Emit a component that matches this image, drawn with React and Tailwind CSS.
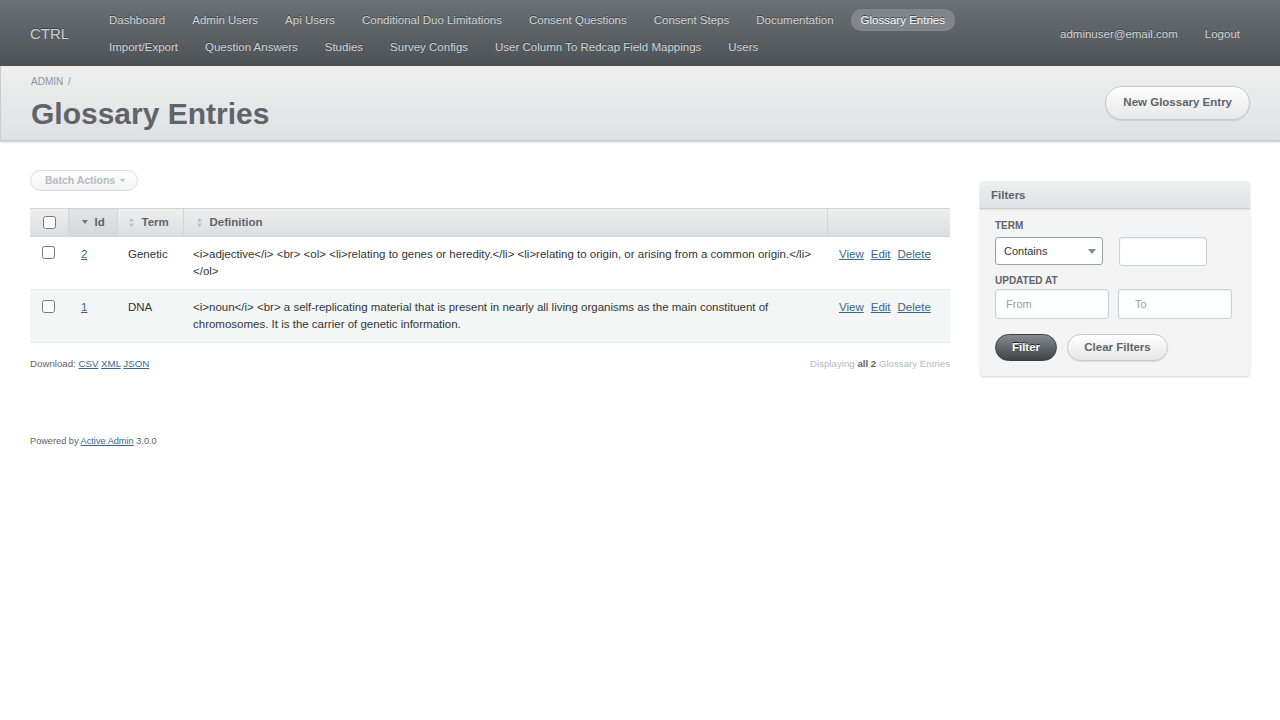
import React from "react";

const navRow = [
  "Dashboard",
  "Admin Users",
  "Api Users",
  "Conditional Duo Limitations",
  "Consent Questions",
  "Consent Steps",
  "Documentation",
  "Glossary Entries",
  "Import/Export",
  "Question Answers",
  "Studies",
  "Survey Configs",
  "User Column To Redcap Field Mappings",
  "Users",
];

function SortDown() {
  return (
    <svg width="6" height="4" viewBox="0 0 6 4" className="inline-block mr-[7px] align-middle relative -top-[1px]">
      <path d="M0 0 L6 0 L3 4 Z" fill="#6f767b" />
    </svg>
  );
}

function SortBoth() {
  return (
    <svg width="5" height="9" viewBox="0 0 5 9" className="inline-block mr-[8px] align-middle relative -top-[1px]">
      <path d="M0 3.5 L5 3.5 L2.5 0 Z" fill="#b8bfc4" />
      <path d="M0 5.5 L5 5.5 L2.5 9 Z" fill="#b8bfc4" />
    </svg>
  );
}

function Actions() {
  return (
    <>
      <a className="text-[#38678b] underline mr-[7px]">View</a>
      <a className="text-[#38678b] underline mr-[7px]">Edit</a>
      <a className="text-[#38678b] underline">Delete</a>
    </>
  );
}

export default function App() {
  return (
    <div className="font-['Liberation_Sans',Arial,sans-serif] bg-white min-h-[720px] text-[#323537]">
      {/* Header */}
      <div className="flex h-[66px] items-center bg-gradient-to-b from-[#6a7176] to-[#4d5256] pl-[30px] pr-[30px]">
        <div className="w-[69px] flex-none pt-[2px] text-[15px] text-[#cdcdcd] [text-shadow:0_-1px_0_#3f4447]">CTRL</div>
        <div className="flex flex-wrap w-[945px] gap-y-[5px]">
          {navRow.map((n) => {
            const active = n === "Glossary Entries";
            return (
              <a
                key={n}
                className={
                  "px-[10px] py-[5px] mr-[7px] rounded-[10px] text-[11.5px] leading-[12px] [text-shadow:0_-1px_0_#3f4447] " +
                  (active ? "bg-[#80868b] text-white" : "text-[#d2d4d5]")
                }
              >
                {n}
              </a>
            );
          })}
        </div>
        <div className="ml-auto flex pt-[2px]">
          <a className="px-[10px] py-[5px] mr-[7px] text-[11.5px] leading-[12px] text-[#d2d4d5] [text-shadow:0_-1px_0_#3f4447]">adminuser@email.com</a>
          <a className="px-[10px] py-[5px] text-[11.5px] leading-[12px] text-[#d2d4d5] [text-shadow:0_-1px_0_#3f4447]">Logout</a>
        </div>
      </div>

      {/* Title bar */}
      <div className="flex h-[75px] items-center justify-between bg-gradient-to-b from-[#efefef] to-[#dfe1e2] border-b border-l border-[#cdcdcd] shadow-[0_1px_2px_rgba(0,0,0,0.25)] pl-[30px] pr-[30px]">
        <div className="flex flex-col self-start pt-[9px]">
          <div className="text-[10px] leading-[14px] text-[#8a949e]">
            ADMIN <span className="ml-[2px] text-[#8a949e]">/</span>
          </div>
          <h2 className="mt-[8px] text-[30px] leading-[34px] font-bold text-[#5e6469]">Glossary Entries</h2>
        </div>
        <a className="flex h-[34px] items-center rounded-full border border-[#c7c7c7] bg-gradient-to-b from-white to-[#e7e7e7] px-[17px] text-[11.5px] font-bold text-[#5e6469] shadow-[0_1px_1px_rgba(0,0,0,0.1)]">
          New Glossary Entry
        </a>
      </div>

      {/* Content */}
      <div className="flex pl-[30px] pr-[30px] pt-[26px] gap-[30px]">
        <div className="w-[920px] flex-none">
          <div className="inline-flex h-[21px] items-center rounded-full border border-[#dcdcdc] bg-gradient-to-b from-white to-[#f3f3f3] pl-[14px] pr-[12px] text-[10.5px] font-bold text-[#b3bcc1]">
            Batch Actions
            <svg width="5" height="3" viewBox="0 0 5 3" className="ml-[5px]">
              <path d="M0 0 L5 0 L2.5 3 Z" fill="#b3bcc1" />
            </svg>
          </div>

          <table className="mt-[17px] w-[920px] table-fixed border-collapse">
            <colgroup>
              <col className="w-[38px]" />
              <col className="w-[49px]" />
              <col className="w-[66px]" />
              <col className="w-[644px]" />
              <col className="w-[123px]" />
            </colgroup>
            <thead>
              <tr className="h-[28px] bg-gradient-to-b from-[#efefef] to-[#dcdddf] text-[11.5px] font-bold text-[#5e6469]">
                <th className="border-t border-b border-[#d4d4d4] pl-[13px] text-left align-middle">
                  <input type="checkbox" className="m-0 align-middle relative -top-[1px]" />
                </th>
                <th className="border-t border-b border-l border-[#d4d4d4] bg-gradient-to-b from-[#e3e4e5] to-[#d5d7d9] pl-[13px] text-left">
                  <SortDown />Id
                </th>
                <th className="border-t border-b border-l border-[#d4d4d4] pl-[11px] text-left">
                  <SortBoth />Term
                </th>
                <th className="border-t border-b border-l border-[#d4d4d4] pl-[13px] text-left">
                  <SortBoth />Definition
                </th>
                <th className="border-t border-b border-l border-[#d4d4d4]"></th>
              </tr>
            </thead>
            <tbody className="text-[11.5px] leading-[17px] text-[#323537]">
              <tr className="bg-white border-b border-[#e8e8e8]">
                <td className="pl-[12px] pt-[9px] pb-[9px] align-top">
                  <input type="checkbox" className="m-0 mt-[0px]" />
                </td>
                <td className="pl-[13px] pt-[9px] pb-[9px] align-top">
                  <a className="text-[#38678b] underline">2</a>
                </td>
                <td className="pl-[11px] pt-[9px] pb-[9px] align-top">Genetic</td>
                <td className="pl-[10px] pr-[10px] pt-[9px] pb-[9px] align-top">
                  {"<i>adjective</i> <br> <ol> <li>relating to genes or heredity.</li> <li>relating to origin, or arising from a common origin.</li> </ol>"}
                </td>
                <td className="pl-[12px] pt-[9px] pb-[9px] align-top whitespace-nowrap">
                  <Actions />
                </td>
              </tr>
              <tr className="bg-[#f4f5f5] border-b border-[#e8e8e8]">
                <td className="pl-[12px] pt-[9px] pb-[9px] align-top">
                  <input type="checkbox" className="m-0 mt-[1px]" />
                </td>
                <td className="pl-[13px] pt-[9px] pb-[9px] align-top">
                  <a className="text-[#38678b] underline">1</a>
                </td>
                <td className="pl-[11px] pt-[9px] pb-[9px] align-top">DNA</td>
                <td className="pl-[10px] pr-[10px] pt-[9px] pb-[9px] align-top">
                  {"<i>noun</i> <br> a self-replicating material that is present in nearly all living organisms as the main constituent of chromosomes. It is the carrier of genetic information."}
                </td>
                <td className="pl-[12px] pt-[9px] pb-[9px] align-top whitespace-nowrap">
                  <Actions />
                </td>
              </tr>
            </tbody>
          </table>

          <div className="mt-[14px] flex justify-between text-[9.7px] leading-[14px]">
            <div className="text-[#5e6469]">
              Download: <a className="text-[#38678b] underline">CSV</a>{" "}
              <a className="text-[#38678b] underline">XML</a>{" "}
              <a className="text-[#38678b] underline">JSON</a>
            </div>
            <div className="text-[#b3bcc1]">
              Displaying <b className="text-[#5e6469]">all 2</b> Glossary Entries
            </div>
          </div>

          <div className="mt-[63px] text-[9.2px] leading-[14px] text-[#5e6469]">
            Powered by <a className="text-[#38678b] underline">Active Admin</a> 3.0.0
          </div>
        </div>

        {/* Sidebar */}
        <div className="w-[270px] flex-none mt-[14px]">
          <div className="rounded-[4px] bg-[#f4f4f4] shadow-[0_1px_2px_rgba(0,0,0,0.18)]">
            <div className="flex h-[28px] items-center rounded-t-[4px] border-b border-[#cdcdcd] bg-gradient-to-b from-[#efefef] to-[#dfe1e2] pl-[11px] pt-[2px] text-[11.5px] font-bold text-[#5e6469] shadow-[0_1px_1px_rgba(0,0,0,0.08)]">
              Filters
            </div>
            <div className="px-[15px] pt-[10px] pb-[15px]">
              <div className="text-[10px] leading-[14px] font-bold text-[#5e6469]">TERM</div>
              <div className="mt-[3px] flex h-[30px] items-center">
                <div className="flex h-[28px] w-[108px] items-center justify-between rounded-[3px] border border-[#9aa1a6] bg-white pl-[8px] pr-[6px] text-[11px] text-[#323537]">
                  Contains
                  <svg width="8" height="5" viewBox="0 0 8 5">
                    <path d="M0 0 L8 0 L4 5 Z" fill="#888" />
                  </svg>
                </div>
                <div className="ml-[16px] h-[29px] w-[88px] rounded-[3px] border border-[#c9d0d6] bg-white shadow-[inset_0_1px_2px_rgba(0,0,0,0.06)]"></div>
              </div>
              <div className="mt-[8px] text-[10px] leading-[14px] font-bold text-[#5e6469]">UPDATED AT</div>
              <div className="mt-[1px] flex gap-[9px]">
                <div className="flex h-[30px] w-[114px] items-center rounded-[3px] border border-[#c9d0d6] bg-white pl-[10px] text-[11px] text-[#9aa0a5] shadow-[inset_0_1px_2px_rgba(0,0,0,0.06)]">From</div>
                <div className="flex h-[30px] w-[114px] items-center rounded-[3px] border border-[#c9d0d6] bg-white pl-[16px] text-[11px] text-[#9aa0a5] shadow-[inset_0_1px_2px_rgba(0,0,0,0.06)]">To</div>
              </div>
              <div className="mt-[15px] flex gap-[10px]">
                <div className="flex h-[27px] w-[62px] items-center justify-center rounded-full border border-[#3c3f42] bg-gradient-to-b from-[#868c91] to-[#3f4346] text-[11.5px] font-bold text-white [text-shadow:0_-1px_0_#222]">
                  Filter
                </div>
                <div className="flex h-[27px] w-[101px] items-center justify-center rounded-full border border-[#c7c7c7] bg-gradient-to-b from-white to-[#e7e7e7] text-[11.5px] font-bold text-[#5e6469] shadow-[0_1px_1px_rgba(0,0,0,0.1)]">
                  Clear Filters
                </div>
              </div>
            </div>
          </div>
        </div>
      </div>
    </div>
  );
}
